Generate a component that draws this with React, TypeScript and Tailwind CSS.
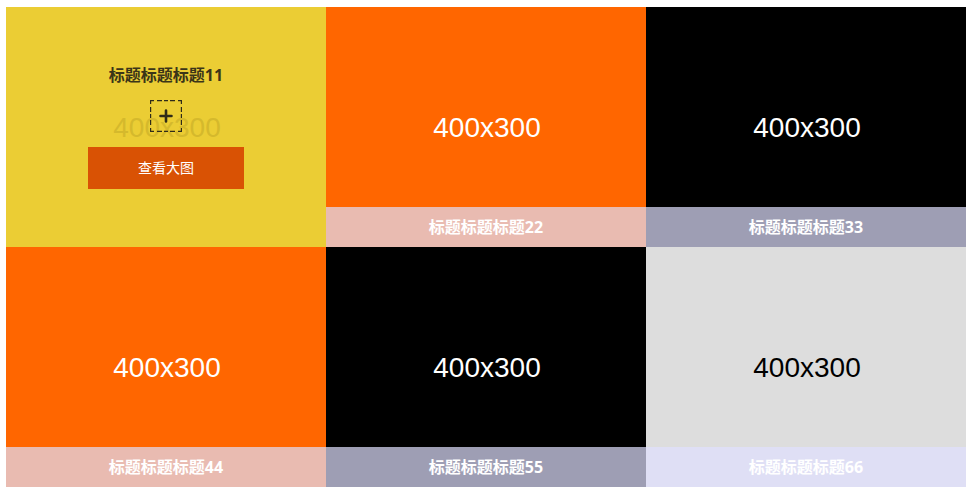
type Card = { title: string; image: string; caption: string };

const cards: Card[] = [
  { title: '标题标题标题22', image: 'bg-[#ff6600] text-white', caption: 'bg-[#e9bbb1]' },
  { title: '标题标题标题33', image: 'bg-black text-white', caption: 'bg-[#9e9eb4]' },
  { title: '标题标题标题44', image: 'bg-[#ff6600] text-white', caption: 'bg-[#e9bbb1]' },
  { title: '标题标题标题55', image: 'bg-black text-white', caption: 'bg-[#9e9eb4]' },
  { title: '标题标题标题66', image: 'bg-[#dddddd] text-black', caption: 'bg-[#dfdff5]' },
];

const placeholder =
  "flex h-full items-center justify-center pt-0.5 pl-0.5 text-[28px] leading-8 font-['Liberation_Sans',Arial,sans-serif]";

function ActiveCard() {
  return (
    <article className="relative aspect-[4/3] overflow-hidden bg-[#ebcd34]">
      <div className={`${placeholder} text-[#d5b92c]`}>400x300</div>
      <div className="absolute inset-0 flex flex-col items-center justify-center pb-0.5">
        <h3 className="mb-[13px] text-base leading-6 font-bold text-[#3b3518]">标题标题标题11</h3>
        <svg className="mb-[15px] h-8 w-8" viewBox="0 0 32 32" fill="none" stroke="#302b18" aria-hidden="true">
          <path
            d="M0 .6h4M7 .6h5M14 .6h4M20 .6h5M28 .6h4M0 31.4h4M7 31.4h5M14 31.4h4M20 31.4h5M28 31.4h4M.6 0v4M.6 7v5M.6 14v4M.6 20v5M.6 28v4M31.4 0v4M31.4 7v5M31.4 14v4M31.4 20v5M31.4 28v4"
            strokeWidth="1.2"
          />
          <path d="M16 10.5v11M10.5 16h11" strokeWidth="2.6" strokeLinecap="round" />
        </svg>
        <button type="button" className="h-[42px] w-39 bg-[#d95204] text-sm text-white">
          查看大图
        </button>
      </div>
    </article>
  );
}

function ImageCard({ title, image, caption }: Card) {
  return (
    <article className={`relative aspect-[4/3] overflow-hidden ${image}`}>
      <div className={placeholder}>400x300</div>
      <h3
        className={`absolute inset-x-0 bottom-0 h-10 text-center text-base leading-10 font-bold text-white ${caption}`}
      >
        {title}
      </h3>
    </article>
  );
}

export default function App() {
  return (
    <main className="bg-white pt-[7px] pr-[9px] pb-2 pl-1.5 font-['Open_Sans','Noto_Sans_CJK_SC',sans-serif]">
      <section className="grid grid-cols-3">
        <ActiveCard />
        {cards.map((card) => (
          <ImageCard key={card.title} {...card} />
        ))}
      </section>
    </main>
  );
}
